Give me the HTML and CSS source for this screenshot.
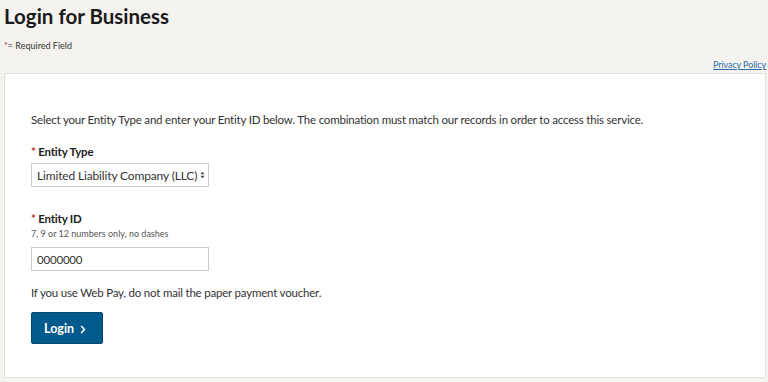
FILE: index.html
```html
<!DOCTYPE html>
<html lang="en">
<head>
    <meta charset="UTF-8">
    <meta name="viewport" content="width=device-width, initial-scale=1.0">
    <title>Login for Business</title>
    <link rel="stylesheet" href="styles.css">
</head>
<body>

<div class="page">
    <h1>Login for Business</h1>
    <p class="required-note"><span class="req">*</span>= Required Field</p>

    <div class="links">
        <a href="#">Privacy Policy</a>
    </div>

    <div class="panel">
        <p class="intro">Select your Entity Type and enter your Entity ID below. The combination must match our records in order to access this service.</p>

        <form method="post">
            <div class="field">
                <label for="entityType"><span class="req">*</span> Entity Type</label>
                <div class="select-wrap">
                    <select id="entityType" name="entityType">
                        <option>Limited Liability Company (LLC)</option>
                        <option>Corporation</option>
                        <option>Partnership</option>
                    </select>
                    <!-- стрелки селекта -->
                    <svg class="arrows" width="5" height="8" viewBox="0 0 5 8">
                        <path d="M0.5 3.2 L2.5 0.8 L4.5 3.2 Z M0.5 4.8 L2.5 7.2 L4.5 4.8 Z" fill="#444"/>
                    </svg>
                </div>
            </div>

            <div class="field">
                <label for="entityId"><span class="req">*</span> Entity ID</label>
                <div class="hint">7, 9 or 12 numbers only, no dashes</div>
                <input type="text" id="entityId" name="entityId" value="0000000">
            </div>

            <p class="note">If you use Web Pay, do not mail the paper payment voucher.</p>

            <button type="submit">Login
                <svg class="chev" width="6" height="9" viewBox="0 0 6 9">
                    <path d="M1.2 1 L4.4 4.5 L1.2 8" fill="none" stroke="#fff" stroke-width="1.6"/>
                </svg>
            </button>
        </form>
    </div>
</div>

</body>
</html>
```

FILE: styles.css
```css
body {
    font-family: Lato, "Open Sans", sans-serif;
    background-color: #f4f3f0;
    color: #222;
    margin: 0;
    padding: 0;
}

.page {
    padding: 0 2px 0 4px;
}

h1 {
    font-size: 20.5px;
    font-weight: bold;
    margin: 0;
    padding-top: 3px;
    line-height: 26px;
    color: #1a1a1a;
}

.required-note {
    font-size: 9px;
    margin: 11px 0 0 0;
    color: #333;
}

.req {
    color: #c0392b;
}

.links {
    text-align: right;
    font-size: 9px;
    letter-spacing: -0.1px;
    margin-top: 8px;
    line-height: 12px;
}

.links a {
    color: #2e6da4;
}

.panel {
    background-color: #fff;
    border: 1px solid #e2e0db;
    margin-top: 2px;
    padding: 39px 26px 0 26px;
    height: 305px;
    box-sizing: border-box;
}

.intro,
.note,
label,
input {
    font-size: 11.5px;
    letter-spacing: -0.2px;
}

.intro {
    margin: 0 0 19px 0;
    color: #333;
}

.field {
    margin-bottom: 25px;
}

label {
    display: block;
    font-weight: bold;
    color: #222;
    margin-bottom: 5px;
}

.hint {
    font-size: 9px;
    color: #555;
    margin-top: -2px;
    margin-bottom: 8px;
}

.select-wrap {
    position: relative;
    width: 178px;
}

select, input {
    display: block;
    width: 178px;
    height: 24px;
    box-sizing: border-box;
    border: 1px solid #ccc;
    font-family: Lato, sans-serif;
    color: #333;
    padding: 0 5px;
    background: #fff;
    border-radius: 0;
    -webkit-appearance: none;
    appearance: none;
}

select {
    font-size: 12px;
    letter-spacing: -0.15px;
    padding-right: 8px;
}

.arrows {
    position: absolute;
    right: 4px;
    top: 8px;
}

.note {
    margin: -10px 0 13px 0;
    color: #333;
}

button {
    background-color: #005a8c;
    color: #fff;
    border: 1px solid #004a73;
    border-radius: 2px;
    font-family: Lato, sans-serif;
    font-size: 12.5px;
    font-weight: bold;
    width: 72px;
    height: 32px;
    padding: 0 0 0 12px;
    text-align: left;
    cursor: pointer;
}

.chev {
    margin-left: 3px;
    vertical-align: -1px;
}
```
